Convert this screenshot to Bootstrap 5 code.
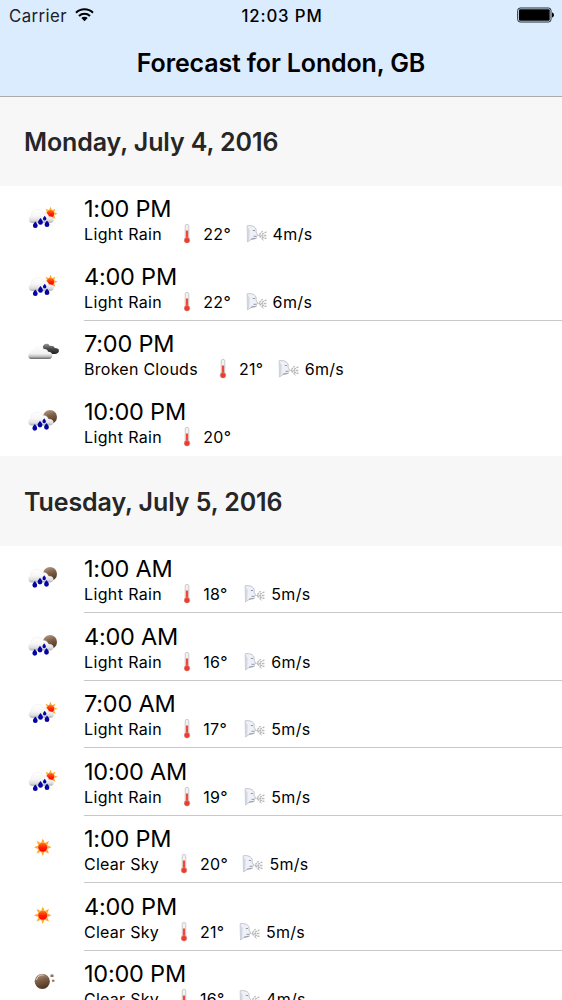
<!DOCTYPE html>
<html lang="en">
<head>
<meta charset="utf-8">
<meta name="viewport" content="width=device-width, initial-scale=1">
<title>Forecast for London, GB</title>
<link href="https://cdn.jsdelivr.net/npm/bootstrap@5.3.0/dist/css/bootstrap.min.css" rel="stylesheet">
<style>
  body { font-family: Inter, "Liberation Sans", sans-serif; color: #000; background: #fff; height: 1000px; overflow: hidden; line-height: 1.2; }
  .app-top { background: #daecfe; height: 97px; border-bottom: 1px solid #a9abad; }
  .status { height: 30px; padding: 0 7px 0 9px; font-size: 16.8px; }
  .status .side { width: 179px; }
  .carrier { letter-spacing: .42px; color: #1c2126; position: relative; top: 1px; }
  .clock { letter-spacing: .85px; font-weight: 500; position: relative; top: 1px; }
  .title { font-size: 25px; font-weight: 600; letter-spacing: -.14px; height: 66px; line-height: 67px; }
  .day { background: #f7f7f7; height: 90px; line-height: 92px; padding-left: 24px; font-size: 25px; font-weight: 600; color: #262626; letter-spacing: -.1px; }
  .first-day { height: 89px; line-height: 91px; }
  .entry { height: 67.5px; }
  .entry-icon { width: 50px; height: 40px; margin: 9px 0 0 20px; }
  .entry-body { margin: 0 0 .5px 14px; padding-top: 9px; }
  .ruled .entry-body { border-bottom: 1px solid #c8c7cc; }
  .hour { font-size: 23.5px; line-height: 28px; letter-spacing: -.22px; }
  .facts { font-size: 16px; line-height: 22px; letter-spacing: .27px; white-space: nowrap; }
  .light-rain { letter-spacing: .37px; }
  .light-rain .temp { min-width: 26.5px; }
  .thermo { width: 10px; height: 22px; margin: 0 11px 0 20px; }
  .wind { width: 22px; height: 20px; margin: 0 5px 0 14.5px; }
</style>
</head>
<body>
<svg width="0" height="0" class="position-absolute" aria-hidden="true">
  <defs>
    <linearGradient id="white" x1="0" y1="0" x2="0" y2="1"><stop offset="0" stop-color="#fff"/><stop offset=".5" stop-color="#f6f6f6"/><stop offset=".8" stop-color="#dedede"/><stop offset="1" stop-color="#aaa"/></linearGradient>
    <linearGradient id="grey" x1="0" y1="0" x2="0" y2="1"><stop offset="0" stop-color="#fff"/><stop offset=".6" stop-color="#f2f2f2"/><stop offset=".8" stop-color="#c8c8c8"/><stop offset="1" stop-color="#666"/></linearGradient>
    <linearGradient id="dark" x1="0" y1="0" x2="0" y2="1"><stop offset="0" stop-color="#999"/><stop offset=".5" stop-color="#484848"/><stop offset="1" stop-color="#222"/></linearGradient>
    <linearGradient id="brown" x1=".3" y1="0" x2=".6" y2="1"><stop offset="0" stop-color="#b79a84"/><stop offset=".4" stop-color="#806149"/><stop offset="1" stop-color="#4d321f"/></linearGradient>
    <linearGradient id="core" x1="0" y1="0" x2="0" y2="1"><stop offset="0" stop-color="#ff7a10"/><stop offset=".5" stop-color="#fb2408"/><stop offset="1" stop-color="#f00"/></linearGradient>
    <g id="sunshape">
      <g fill="#ffa526">
        <path id="rays" d="M-1.700-4.500 0-8.800 1.700-4.500ZM-1.700 4.500 0 8.800 1.700 4.500ZM-4.500-1.700-8.800 0-4.500 1.700ZM4.500-1.700 8.800 0 4.500 1.700Z"/>
        <use href="#rays" transform="rotate(45)"/>
      </g>
      <circle r="5.300" fill="#ffbf66"/><circle r="4.500" fill="url(#core)"/>
    </g>
    <path id="drop" d="M0-3.600C.8-2.200 2.400-1 2.400.7a2.400 2.400 0 0 1-4.800 0C-2.400-1-.8-2.200 0-3.600Z" fill="#0404a4"/>
    <g id="raincloud">
      <path d="M12 28c-2 0-3-1.500-3-3.500 0-2 1.300-3.300 2.500-3.600C11.300 17 14 14.500 17.500 14.500c3 0 5 1.500 5.700 3.500 2.200-.7 5.300.8 5.600 3.500 3 0 5 1.200 5 3.200S32.200 28 30 28Z" fill="url(#white)" stroke="#e2e2e2" stroke-width=".4"/>
      <use href="#drop" x="15.300" y="30"/><use href="#drop" x="20.500" y="26.700"/><use href="#drop" x="27" y="29"/>
      <use href="#drop" transform="translate(24.700 23.300) scale(.72)"/>
    </g>
    <symbol id="sunrain" viewBox="0 0 50 40"><use href="#sunshape" transform="translate(30.500 18.700) scale(.8)"/><use href="#raincloud"/></symbol>
    <symbol id="moonrain" viewBox="0 0 50 40"><circle cx="30" cy="19" r="7" fill="url(#brown)"/><use href="#raincloud" x="-.5" y="-.4"/></symbol>
    <symbol id="clouds" viewBox="0 0 50 40">
      <path d="M25 23c-2-1.500-3-3-2.500-5 .3-3 2.300-4.700 4.500-4.300 1.500.2 2.500 1.200 2.800 2.300 2-.5 4.300 0 5 2 2.300-.2 4.200.8 4.200 2.800S37 24 35 24c-4 0-7 .5-10-1Z" fill="url(#dark)"/>
      <path d="M11 29c-1.700 0-2.700-1.300-2.700-3.200 0-2 1-3.300 2.300-3.500.4-2 1.900-2.600 3-2.300C14.100 17 16 15.200 18.500 15.200c2.700 0 4.700 1.500 5.300 4 2.200-.4 4 .8 4.200 2.600 2.500-.2 4.300 1.200 4.300 3.500 0 2.200-1.300 3.700-3.300 3.700Z" fill="url(#grey)"/>
    </symbol>
    <symbol id="sun" viewBox="0 0 50 40"><use href="#sunshape" x="22.800" y="22.300"/></symbol>
    <symbol id="moon" viewBox="0 0 50 40"><circle cx="22.300" cy="21.300" r="7.600" fill="url(#brown)"/><path d="M16.500 20a6 6 0 0 1 7-5" fill="none" stroke="#e0cdbf" stroke-width="1"/><path d="M30.500 14.500h3v2.400h-3zM32 19.800h2.400v2H32z" fill="#8b7060"/></symbol>
    <symbol id="thermo" viewBox="0 0 10 22">
      <rect x="3.200" y="1.300" width="3.600" height="15.500" rx="1.800" fill="#f1f1f1" stroke="#b9b9b9" stroke-width=".7"/>
      <path d="M5 7.500v10" stroke="#f0483a" stroke-width="2.300"/><circle cx="5" cy="17.300" r="2.800" fill="#f03a2c" stroke="#c9a5a2" stroke-width=".5"/>
    </symbol>
    <symbol id="wind" viewBox="0 0 22 20">
      <path d="M1.200 1.800C5.500 1 10 2.500 10.200 6.200L10 8l1.900 3.500-1.700.6.100 2.400-4.300.4-4.500 3Z" fill="#f0f1f7" stroke="#b4b9c6" stroke-width=".8"/>
      <path d="M1.300 2v15.500l2-2.300L3.600 6Z" fill="#d3d7e1"/><path d="M6.800 6.500h2.200M7.500 12.300h2.700M5 15.200l4.500-.7" stroke="#9298a8" stroke-width="1"/>
      <g fill="none" stroke="#b8b8b8" stroke-width="1.300" stroke-dasharray="2 .7"><path d="M12.500 11.500h8.500M13.500 10.500c1.500-1.500 2-3 4-3.500M13.500 12.500c2 0 2 2.500 4.500 3.700M16 9.800c2 .5 2.500-2 4.500-1.500M16 13.300c2-.5 2.500 1.500 5 1"/></g>
    </symbol>
  </defs>
</svg>

<header class="app-top">
  <div class="status d-flex align-items-center justify-content-between">
    <div class="side d-flex align-items-center">
      <span class="carrier">Carrier</span>
      <svg class="ms-2" width="19" height="14" viewBox="0 0 19 14" fill="none" stroke="#000" stroke-width="2.100"><path d="M1 4.700a12.200 12.200 0 0 1 17 0M4 7.900a8 8 0 0 1 11 0"/><path d="M9.500 13.200 6.300 10a4.600 4.600 0 0 1 6.400 0Z" fill="#000" stroke="none"/></svg>
    </div>
    <span class="clock">12:03 PM</span>
    <div class="side d-flex justify-content-end">
      <svg width="38" height="16" viewBox="0 0 38 16"><rect x=".7" y="1" width="33.300" height="14" rx="2.500" fill="none" stroke="#222b33"/><rect x="2" y="2.300" width="30.700" height="11.400" rx="1" fill="#000"/><path d="M35 5.500c2.700.5 2.700 4.500 0 5Z" fill="#000"/></svg>
    </div>
  </div>
  <h1 class="title text-center m-0">Forecast for London, GB</h1>
</header>
<main id="forecast"></main>

<script src="https://cdn.jsdelivr.net/npm/bootstrap@5.3.0/dist/js/bootstrap.bundle.min.js"></script>
<script>
  // Each entry: icon, hour, conditions, temperature, wind, separator
  const days = [
    ["Monday, July 4, 2016", [
      ["sunrain", "1:00 PM", "Light Rain", 22, 4, 0],
      ["sunrain", "4:00 PM", "Light Rain", 22, 6, 1],
      ["clouds", "7:00 PM", "Broken Clouds", 21, 6, 0],
      ["moonrain", "10:00 PM", "Light Rain", 20, 0, 0]]],
    ["Tuesday, July 5, 2016", [
      ["moonrain", "1:00 AM", "Light Rain", 18, 5, 1],
      ["moonrain", "4:00 AM", "Light Rain", 16, 6, 1],
      ["sunrain", "7:00 AM", "Light Rain", 17, 5, 1],
      ["sunrain", "10:00 AM", "Light Rain", 19, 5, 1],
      ["sun", "1:00 PM", "Clear Sky", 20, 5, 1],
      ["sun", "4:00 PM", "Clear Sky", 21, 5, 1],
      ["moon", "10:00 PM", "Clear Sky", 16, 4, 0]]]
  ];
  document.getElementById("forecast").innerHTML = days.map(([day, list], i) => `
    <section>
      <h2 class="day m-0 ${i ? "" : "first-day"}">${day}</h2>
      ${list.map(([icon, hour, sky, temp, wind, rule]) => `
      <div class="entry d-flex ${rule ? "ruled" : ""}">
        <svg class="entry-icon flex-shrink-0"><use href="#${icon}"/></svg>
        <div class="entry-body flex-grow-1">
          <div class="hour">${hour}</div>
          <div class="facts d-flex align-items-center ${sky.toLowerCase().replace(" ", "-")}">
            <span>${sky}</span><svg class="thermo"><use href="#thermo"/></svg><span class="temp">${temp}°</span>
            ${wind ? `<svg class="wind"><use href="#wind"/></svg><span>${wind}m/s</span>` : ""}
          </div>
        </div>
      </div>`).join("")}
    </section>`).join("");
</script>
</body>
</html>
